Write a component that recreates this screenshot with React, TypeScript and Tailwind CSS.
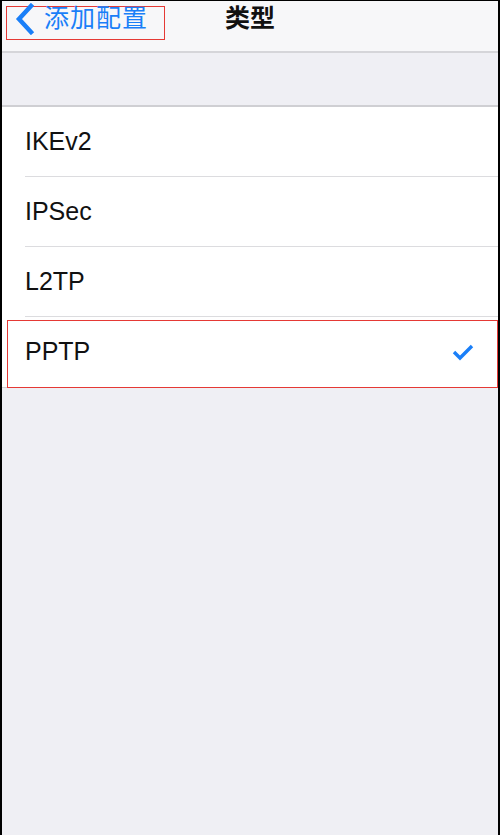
import React from "react";

const types = ["IKEv2", "IPSec", "L2TP", "PPTP"];
const selected = "PPTP";

export default function App() {
  return (
    <div
      className="w-[500px] h-[835px] flex flex-col bg-[#efeff4] border-l-2 border-r-2 border-t border-black"
      style={{ fontFamily: "'Liberation Sans', 'Noto Sans CJK SC', sans-serif" }}
    >
      {/* nav bar */}
      <div className="relative h-[52px] shrink-0 bg-[#f7f7f9] border-b-2 border-[#d5d5d9] flex items-start">
        <div className="ml-[4px] mt-[5px] h-[34px] w-[159px] border border-[#e53935] flex items-center">
          <svg width="22" height="32" viewBox="0 0 22 32" className="ml-[6px] -mt-[8px]">
            <path d="M18 3 L6 16 L18 29" fill="none" stroke="#1a7ff8" strokeWidth="4.5" strokeLinecap="square" />
          </svg>
          <span className="ml-[9px] -mt-[10px] text-[25px] leading-none text-[#1a7ff8] tracking-[1px]">添加配置</span>
        </div>
        <div className="absolute left-0 right-0 top-[4px] text-center text-[25px] leading-[26px] font-semibold text-[#111]">
          类型
        </div>
      </div>

      {/* spacer */}
      <div className="h-[54px] shrink-0 border-b-2 border-[#cfcfd3]" />

      {/* list */}
      <div className="bg-white">
        {types.map((t, i) => (
          <div key={t} className="relative h-[70px] flex items-center pl-[23px] pr-[24px]">
            <span className="text-[25px] text-[#111]">{t}</span>
            {t === selected && (
              <svg width="22" height="18" viewBox="0 0 22 18" className="ml-auto">
                <path d="M2 9 L8 15 L20 3" fill="none" stroke="#1a7ff8" strokeWidth="3.4" />
              </svg>
            )}
            {i < types.length - 1 && (
              <div className="absolute left-[23px] right-0 bottom-0 h-px bg-[#dcdcdf]" />
            )}
            {t === selected && (
              <div className="absolute left-[5px] right-0 top-[3px] bottom-[-1px] border border-[#e53935]" />
            )}
          </div>
        ))}
      </div>
      <div className="h-px bg-[#cfcfd3]" />
    </div>
  );
}
